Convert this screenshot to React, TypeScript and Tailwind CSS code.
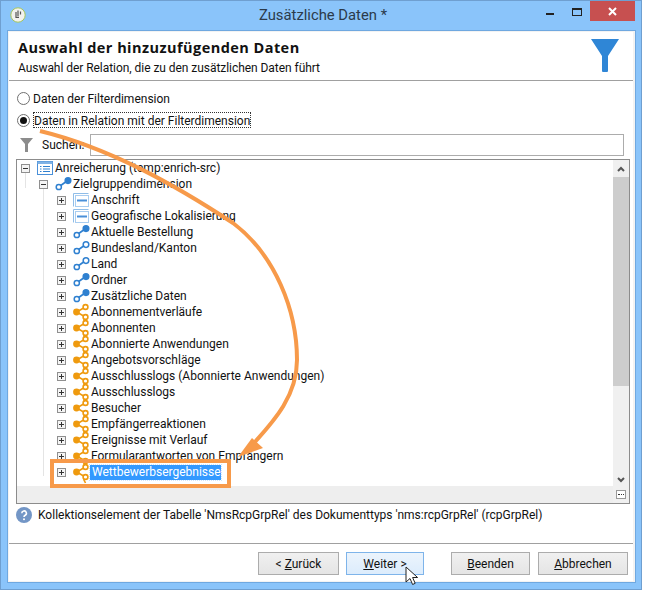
import React from 'react';

const Plus = ({ open }: { open?: boolean }) => (
  <svg width="9" height="9" viewBox="0 0 9 9" className="relative shrink-0">
    <rect x="0.5" y="0.5" width="8" height="8" fill="#f4f4f4" stroke="#8f8f8f" />
    <path d="M2 4.5h5" stroke="#333" />
    {!open && <path d="M4.5 2v5" stroke="#333" />}
  </svg>
);

const TableIcon = () => (
  <svg width="16" height="14" viewBox="0 0 16 14" className="shrink-0">
    <path d="M0.5 13.5V0.5H15.5" fill="none" stroke="#8fbde8" />
    <rect x="2.5" y="2.5" width="13" height="11" fill="#fff" stroke="#a9cdf0" />
    <path d="M4 7.5h10" stroke="#4a90d9" strokeWidth="2" />
  </svg>
);

const ListIcon = () => (
  <svg width="16" height="14" viewBox="0 0 16 14" className="shrink-0">
    <rect x="0.5" y="0.5" width="15" height="13" fill="#fff" stroke="#4a90d9" />
    <rect x="0.5" y="0.5" width="15" height="2.5" fill="#7fb2e5" />
    <path d="M3 5.5h1.5M6 5.5h7M3 8h1.5M6 8h7M3 10.5h1.5M6 10.5h7" stroke="#2f80d0" />
  </svg>
);

const LinkIcon = ({ filled }: { filled?: boolean }) => (
  <svg width="17" height="14" viewBox="0 0 17 14" className="shrink-0">
    <path d="M5 9L12 4" stroke="#2f80d0" strokeWidth="1.6" />
    <circle cx="3.8" cy="10" r="2.6" fill="#fff" stroke="#2f80d0" strokeWidth="1.5" />
    <circle cx="13" cy="3.6" r="2.8" fill={filled ? '#2f80d0' : '#fff'} stroke="#2f80d0" strokeWidth="1.5" />
  </svg>
);

const MultiIcon = () => (
  <svg width="17" height="16" viewBox="0 0 17 16" className="shrink-0 overflow-visible">
    <path d="M3.5 8L12.5 3M3.5 8L12.5 13M12.5 13L11 16L12.5 19" stroke="#ef9a0e" strokeWidth="1.6" fill="none" />
    <circle cx="3.5" cy="8" r="3.4" fill="#ef9a0e" />
    <circle cx="12.5" cy="3" r="2.4" fill="#fff" stroke="#ef9a0e" strokeWidth="1.6" />
    <circle cx="12.5" cy="13" r="2.4" fill="#fff" stroke="#ef9a0e" strokeWidth="1.6" />
  </svg>
);

type Row = { label: string; level: number; icon: React.ReactNode; open?: boolean };

const rows: Row[] = [
  { label: 'Anreicherung (temp:enrich-src)', level: 0, icon: <ListIcon />, open: true },
  { label: 'Zielgruppendimension', level: 1, icon: <LinkIcon filled />, open: true },
  { label: 'Anschrift', level: 2, icon: <TableIcon /> },
  { label: 'Geografische Lokalisierung', level: 2, icon: <TableIcon /> },
  { label: 'Aktuelle Bestellung', level: 2, icon: <LinkIcon filled /> },
  { label: 'Bundesland/Kanton', level: 2, icon: <LinkIcon /> },
  { label: 'Land', level: 2, icon: <LinkIcon /> },
  { label: 'Ordner', level: 2, icon: <LinkIcon filled /> },
  { label: 'Zusätzliche Daten', level: 2, icon: <LinkIcon filled /> },
  { label: 'Abonnementverläufe', level: 2, icon: <MultiIcon /> },
  { label: 'Abonnenten', level: 2, icon: <MultiIcon /> },
  { label: 'Abonnierte Anwendungen', level: 2, icon: <MultiIcon /> },
  { label: 'Angebotsvorschläge', level: 2, icon: <MultiIcon /> },
  { label: 'Ausschlusslogs (Abonnierte Anwendungen)', level: 2, icon: <MultiIcon /> },
  { label: 'Ausschlusslogs', level: 2, icon: <MultiIcon /> },
  { label: 'Besucher', level: 2, icon: <MultiIcon /> },
  { label: 'Empfängerreaktionen', level: 2, icon: <MultiIcon /> },
  { label: 'Ereignisse mit Verlauf', level: 2, icon: <MultiIcon /> },
  { label: 'Formularantworten von Empfängern', level: 2, icon: <MultiIcon /> },
];

const indent = ['pl-[4px]', 'pl-[22px]', 'pl-[40px]'];

const Button = ({ children, className, active }: { children: React.ReactNode; className: string; active?: boolean }) => (
  <button
    className={
      'h-[23px] border text-[12px] text-[#111] ' +
      (active
        ? 'border-[#7eb4ea] bg-gradient-to-b from-[#ecf4fc] to-[#dcecfc] '
        : 'border-[#acacac] bg-gradient-to-b from-[#f0f0f0] to-[#e5e5e5] ') +
      className
    }
  >
    {children}
  </button>
);

export default function App() {
  return (
    <div className="h-[609px] w-[658px] bg-white font-['Roboto',sans-serif] text-[12px] text-[#111]">
      <div className="relative flex h-[590px] w-[642px] flex-col border border-[#6f9fd0] bg-[#8ac4fa]">
        {/* title bar */}
        <div className="relative flex h-[29px] shrink-0 items-center justify-center text-[14.8px] text-[#2b3a4a]">
          <svg width="16" height="16" viewBox="0 0 16 16" className="absolute left-[9px] top-[6px]">
            <circle cx="8" cy="8" r="7.2" fill="#f2f2ee" stroke="#a8c65a" />
            <path d="M8 3.5v6M6 5v5.5h3M10.5 4.5v3" stroke="#555" strokeWidth="1.2" fill="none" />
          </svg>
          <span className="pl-[4px]">Zusätzliche Daten *</span>
          <div className="absolute left-[545px] top-[12px] h-[2px] w-[8px] bg-[#222]" />
          <div className="absolute left-[571px] top-[7px] h-[8px] w-[10px] border border-t-2 border-[#222]" />
          <div className="absolute left-[589px] top-0 flex h-[20px] w-[45px] items-center justify-center bg-[#c75050]">
            <svg width="9" height="9" viewBox="0 0 9 9">
              <path d="M1 1l7 7M8 1l-7 7" stroke="#fff" strokeWidth="2" />
            </svg>
          </div>
        </div>

        {/* client area */}
        <div className="mb-[6px] ml-[6px] mr-[5px] flex min-h-0 flex-1 flex-col border border-[#6fa8e0] bg-[#f3f3f3] pb-[1px] pl-[1px] pr-[2px] pt-[1px]">
          <div className="flex min-h-0 flex-1 flex-col bg-white">
            {/* header */}
            <div className="flex h-[49px] shrink-0 justify-between border-b border-[#a0a0a0] pl-[9px] pr-[14px] pt-[6px]">
              <div>
                <div className="font-['Open_Sans',sans-serif] text-[14.5px] font-bold leading-[20px] tracking-[0.45px] text-[#111]">
                  Auswahl der hinzuzufügenden Daten
                </div>
                <div className="mt-[2px] text-[12px] leading-[16px] tracking-[-0.05px]">Auswahl der Relation, die zu den zusätzlichen Daten führt</div>
              </div>
              <svg width="28" height="33" viewBox="0 0 28 33" className="mt-[1px]">
                <path d="M0 0h28L17 17v15a1 1 0 0 1-1 1h-4a1 1 0 0 1-1-1V17z" fill="#2f86d6" />
              </svg>
            </div>

            {/* options */}
            <div className="flex flex-col pl-[8px] pr-[9px] pt-[9px]">
              <label className="flex h-[16px] items-center gap-[3px]">
                <span className="h-[13px] w-[13px] rounded-full border border-[#707070] bg-white" />
                <span className="pt-[2px]">Daten der Filterdimension</span>
              </label>
              <label className="mt-[6px] flex h-[16px] items-center gap-[3px]">
                <span className="flex h-[13px] w-[13px] items-center justify-center rounded-full border border-[#707070] bg-white">
                  <span className="h-[7px] w-[7px] rounded-full bg-[#111]" />
                </span>
                <span className="h-[16px] border border-dotted border-[#333] leading-[16px]">Daten in Relation mit der Filterdimension</span>
              </label>
              <div className="mt-[6px] flex h-[22px] items-center">
                <svg width="13" height="14" viewBox="0 0 13 14" className="ml-[3px] shrink-0">
                  <path d="M0 0h13L8 6v8H5V6z" fill="#8c8c8c" />
                </svg>
                <span className="ml-[9px] w-[48px] shrink-0">Suchen:</span>
                <div className="h-[22px] flex-1 border border-[#acacac] bg-white" />
              </div>
            </div>

            {/* tree */}
            <div className="ml-[7px] mr-[3px] mt-[3px] flex h-[345px] shrink-0 border border-[#8c8c8c] bg-white">
              <div className="flex min-w-0 flex-1 flex-col">
                <div className="relative flex-1">
                  <div className="absolute left-[8px] top-[12px] h-[16px] w-px bg-[#e4e4e4]" />
                  <div className="absolute left-[26px] top-[28px] h-[288px] w-px bg-[#e4e4e4]" />
                  {rows.map((row) => (
                    <div key={row.label} className={'flex h-[16px] items-center whitespace-nowrap leading-[16px] ' + indent[row.level]}>
                      <Plus open={row.open} />
                      <span className="ml-[7px] mr-[2px] flex w-[16px] justify-center">{row.icon}</span>
                      <span className="relative">{row.label}</span>
                    </div>
                  ))}
                  <div className="flex h-[16px] items-center whitespace-nowrap pl-[40px]">
                    <Plus />
                    <span className="ml-[7px] mr-[1px] flex w-[16px] justify-center"><MultiIcon /></span>
                    <span className="relative w-[131px] bg-[#3399ff] px-[2px] leading-[15px] text-white outline-1 outline-dotted outline-[#cde4fb]">Wettbewerbsergebnisse</span>
                  </div>
                </div>
                <div className="h-[17px] shrink-0 bg-[#eeeeee]" />
              </div>
              <div className="flex w-[16px] shrink-0 flex-col items-center bg-[#f0f0f0]">
                <svg width="10" height="17" viewBox="0 0 10 17" className="shrink-0">
                  <path d="M2 11l3-3 3 3" stroke="#555" strokeWidth="2" fill="none" />
                </svg>
                <div className="h-[209px] w-full bg-[#cdcdcd]" />
                <div className="flex-1" />
                <svg width="10" height="17" viewBox="0 0 10 17" className="shrink-0">
                  <path d="M2 7l3 3 3-3" stroke="#555" strokeWidth="2" fill="none" />
                </svg>
                <div className="mb-[4px] mt-[2px] flex h-[9px] w-[10px] items-center justify-center border border-[#999] bg-white">
                  <span className="h-[1px] w-[6px] border-t border-dotted border-[#333]" />
                </div>
              </div>
            </div>

            {/* message */}
            <div className="flex h-[40px] shrink-0 items-start border-b border-[#a0a0a0] px-[7px] pt-[3px] leading-[17px]">
              <svg width="16" height="16" viewBox="0 0 16 16" className="mr-[6px] shrink-0">
                <circle cx="8" cy="8" r="8" fill="#7396c6" />
                <path d="M5.8 6.2a2.3 2.3 0 1 1 3.4 2c-.8.5-1.2.9-1.2 1.8" stroke="#fff" strokeWidth="1.6" fill="none" />
                <circle cx="8" cy="12.3" r="1" fill="#fff" />
              </svg>
              <span>Kollektionselement der Tabelle 'NmsRcpGrpRel' des Dokumenttyps 'nms:rcpGrpRel' (rcpGrpRel)</span>
            </div>

            {/* footer */}
            <div className="flex flex-1 items-start pl-[249px] pt-[8px]">
              <Button className="w-[81px]">&lt; <span className="underline">Z</span>urück</Button>
              <Button active className="ml-[7px] w-[78px]"><span className="underline">W</span>eiter &gt;</Button>
              <Button className="ml-[27px] w-[79px]"><span className="underline">B</span>eenden</Button>
              <Button className="ml-[8px] w-[90px]"><span className="underline">A</span>bbrechen</Button>
            </div>
          </div>
        </div>

        {/* annotation drawn over the dialog */}
        <svg width="642" height="590" viewBox="0 0 642 590" className="pointer-events-none absolute -left-px -top-px">
          <path d="M40 131C110 148 175 185 233 223C275 255 297 310 297 360C297 395 275 420 254 443" stroke="#f79a4a" strokeWidth="4" fill="none" />
          <path d="M238 457L252 438L263 448z" fill="#f79a4a" />
        </svg>
        <div className="pointer-events-none absolute left-[49px] top-[458px] h-[29px] w-[181px] border-[4px] border-[#f79a4a]" />
        <svg width="14" height="21" viewBox="0 0 14 21" className="pointer-events-none absolute left-[404px] top-[565px]">
          <path d="M1 1v15l4-3.5 2.6 6 2.6-1.2-2.6-5.8h5z" fill="#fff" stroke="#222" />
        </svg>
      </div>
    </div>
  );
}
